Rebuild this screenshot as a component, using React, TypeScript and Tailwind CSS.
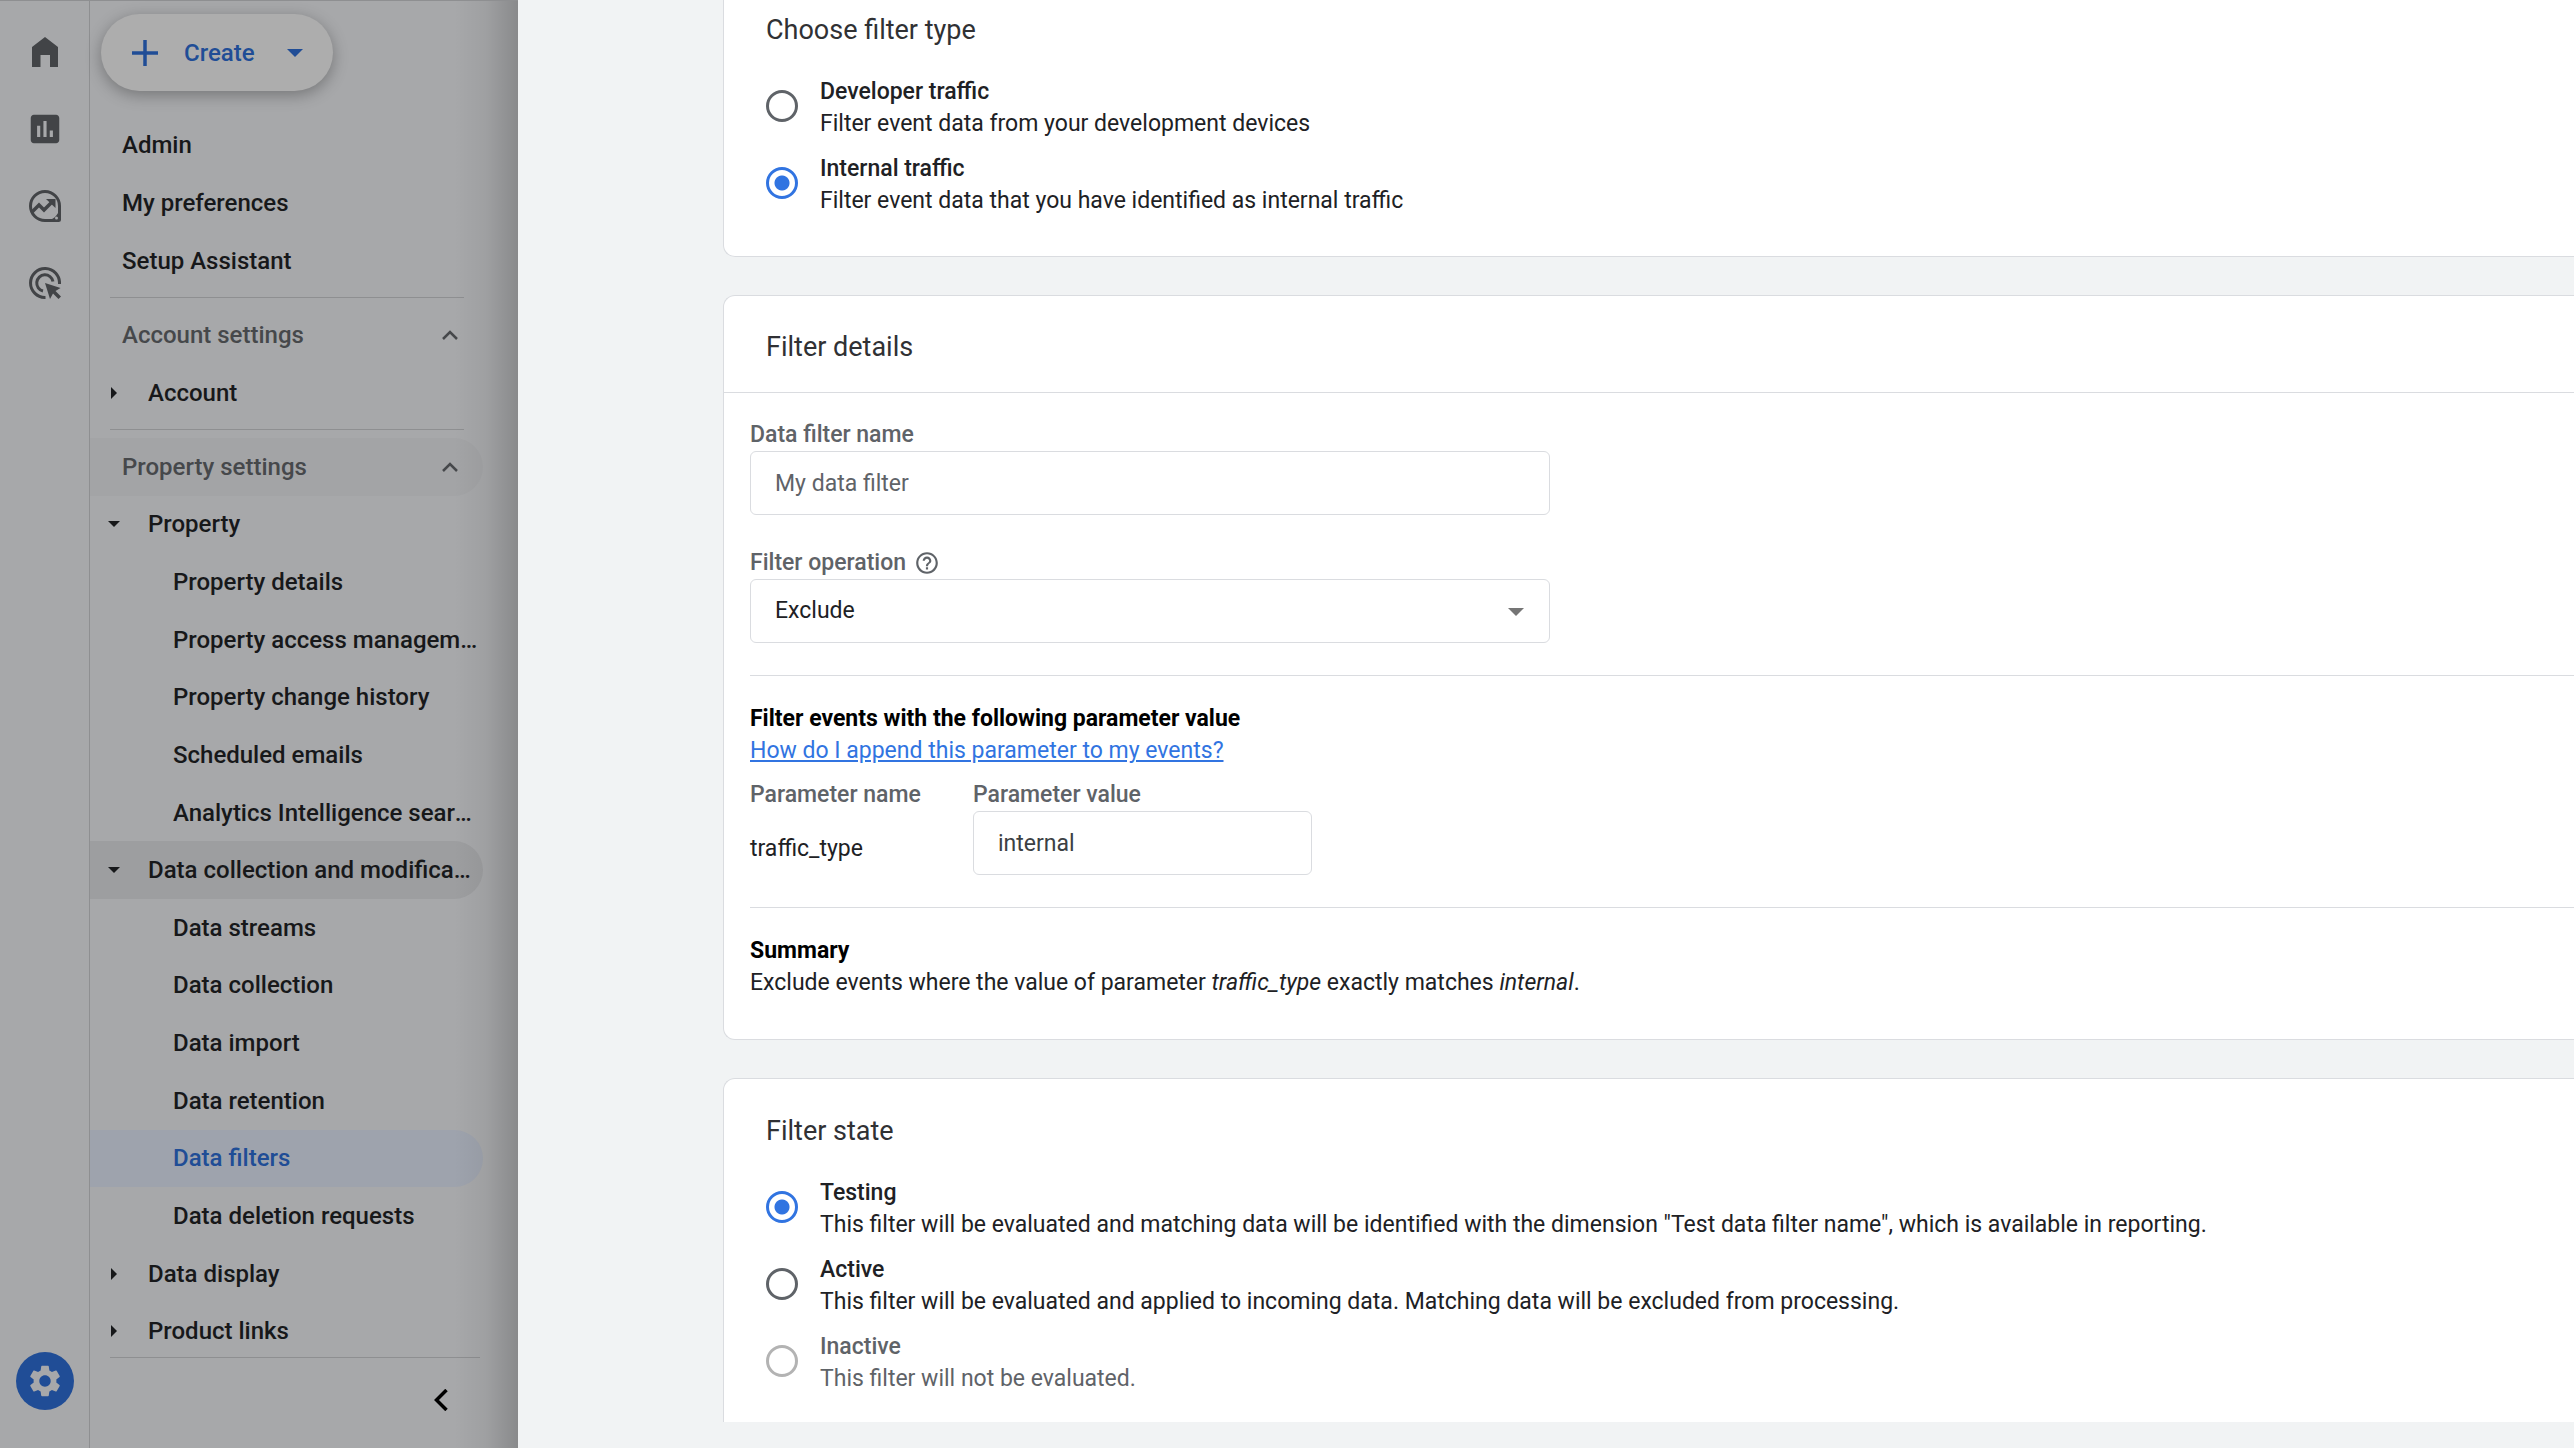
import { useState } from 'react';
import type { ReactNode } from 'react';
import clsx from 'clsx';
import { MdHelpOutline, MdInsertChart, MdSettings } from 'react-icons/md';

type NavRow = { label: string; level: 1 | 2 | 3; open?: boolean; tone?: 'hover' | 'parent' | 'active' };

const TOP_LINKS = ['Admin', 'My preferences', 'Setup Assistant'];

const PROPERTY_ROWS: NavRow[] = [
  { label: 'Property settings', level: 1, open: true, tone: 'hover' },
  { label: 'Property', level: 2, open: true },
  { label: 'Property details', level: 3 },
  { label: 'Property access management', level: 3 },
  { label: 'Property change history', level: 3 },
  { label: 'Scheduled emails', level: 3 },
  { label: 'Analytics Intelligence search history', level: 3 },
  { label: 'Data collection and modification', level: 2, open: true, tone: 'parent' },
  { label: 'Data streams', level: 3 },
  { label: 'Data collection', level: 3 },
  { label: 'Data import', level: 3 },
  { label: 'Data retention', level: 3 },
  { label: 'Data filters', level: 3, tone: 'active' },
  { label: 'Data deletion requests', level: 3 },
  { label: 'Data display', level: 2 },
  { label: 'Product links', level: 2 },
];

const TYPE_OPTIONS = [
  { value: 'developer', label: 'Developer traffic', text: 'Filter event data from your development devices' },
  { value: 'internal', label: 'Internal traffic', text: 'Filter event data that you have identified as internal traffic' },
];

const STATE_OPTIONS = [
  {
    value: 'testing',
    label: 'Testing',
    text: 'This filter will be evaluated and matching data will be identified with the dimension "Test data filter name", which is available in reporting.',
  },
  {
    value: 'active',
    label: 'Active',
    text: 'This filter will be evaluated and applied to incoming data. Matching data will be excluded from processing.',
  },
  { value: 'inactive', label: 'Inactive', text: 'This filter will not be evaluated.', disabled: true },
];

function HomeIcon() {
  return (
    <svg viewBox="0 0 26 30" className="h-[30px] w-[26px]" fill="currentColor">
      <path d="M13 0 26 10v20h-8V18H8.500v12H0V10z" />
    </svg>
  );
}

function ExploreIcon() {
  return (
    <svg viewBox="0 0 32 32" className="size-8" fill="none" stroke="currentColor" strokeWidth="3">
      <path d="M16 30.500A14.500 14.500 0 1 1 30.500 16v13.500a1 1 0 0 1-1 1z" />
      <path d="m3 22 7-7 5 5 9-9" strokeWidth="3.500" />
      <path d="M17 9h9.500v9z" fill="currentColor" stroke="none" />
      <path d="M30 20v10H20c5-1 9-5 10-10z" fill="currentColor" stroke="none" />
      <circle cx="27.500" cy="28" r="1.500" fill="#a7a8aa" stroke="none" />
    </svg>
  );
}

function AdsIcon() {
  return (
    <svg viewBox="0 0 32 32" className="size-8" fill="none" stroke="currentColor" strokeWidth="3">
      <path d="M16.500 30.500A14.500 14.500 0 1 1 30.500 17" />
      <path d="M14 24A8.200 8.200 0 1 1 24 14.500" />
      <path d="m16 16 15.500 5-5 3 5.500 5.500-2.500 2.500-5.500-5.500L21 32z" fill="currentColor" stroke="none" />
    </svg>
  );
}

function Chevron({ className }: { className: string }) {
  return (
    <svg viewBox="0 0 16 10" className={className} fill="none" stroke="currentColor" strokeWidth="2.500">
      <path d="m1 9 7-7 7 7" />
    </svg>
  );
}

function Caret({ open }: { open?: boolean }) {
  return (
    <svg viewBox="0 0 12 12" className="size-3 shrink-0" fill="currentColor">
      <path d={open ? 'M0 3h12L6 9z' : 'M3 0v12l6-6z'} />
    </svg>
  );
}

function NavItem({ label, level, open, tone, className }: NavRow & { className?: string }) {
  return (
    <button
      className={clsx(
        'flex w-[393px] items-center rounded-l-sm rounded-r-full text-left',
        level === 1 && 'pr-4 pl-8 text-[#46484b]',
        level === 2 && 'gap-7 pr-2 pl-[18px]',
        level === 3 && 'pr-1 pl-[83px]',
        tone === 'hover' && 'bg-[#a3a4a6]',
        tone === 'parent' && 'bg-[#9d9ea0]',
        tone === 'active' && 'bg-[#9ea3ad] text-[#204d96]',
        className,
      )}
    >
      {level === 2 && <Caret open={open} />}
      <span className="flex-1 truncate">{label}</span>
      {level === 1 && <Chevron className="mr-[9px] h-[10px] w-4" />}
    </button>
  );
}

function Sidebar() {
  return (
    <nav className="flex w-[428px] shrink-0 flex-col">
      <button className="mt-[13px] ml-[11px] flex h-[77px] w-[232px] items-center rounded-full bg-[#adadad] pl-[31px] text-[#204d96] shadow-[0_4px_16px_rgba(0,0,0,0.3)]">
        <svg viewBox="0 0 26 26" className="size-[26px]" stroke="currentColor" strokeWidth="3.500">
          <path d="M13 0v26M0 13h26" />
        </svg>
        <span className="ml-[26px] w-[103px] text-left">Create</span>
        <svg viewBox="0 0 16 8" className="h-2 w-4" fill="currentColor">
          <path d="M0 0h16L8 8z" />
        </svg>
      </button>
      <div className="mt-[25px] flex flex-col">
        {TOP_LINKS.map(label => (
          <a key={label} href="#" className="flex h-[58px] items-center pl-8">{label}</a>
        ))}
      </div>
      <hr className="mt-[7px] mr-[54px] ml-5 border-[#8e8f91]" />
      <NavItem label="Account settings" level={1} open className="mt-2 h-[58px]" />
      <NavItem label="Account" level={2} className="h-[58px]" />
      <hr className="mt-[7px] mr-[54px] ml-5 border-[#8e8f91]" />
      <div className="mt-2 flex flex-1 flex-col">
        {PROPERTY_ROWS.map(row => (
          <NavItem key={row.label} {...row} className="min-h-12 flex-1" />
        ))}
      </div>
      <div className="-mt-[3px] mr-[38px] ml-5 flex h-[91px] justify-end border-t border-[#8e8f91] pt-5 pr-[26px]">
        <button aria-label="Collapse menu" className="h-11 w-5 text-black">
          <svg viewBox="0 0 14 22" className="h-[22px] w-[14px]" fill="none" stroke="currentColor" strokeWidth="3.500">
            <path d="m12.500 1-10 10 10 10" />
          </svg>
        </button>
      </div>
    </nav>
  );
}

function Card({ className, children }: { className?: string; children: ReactNode }) {
  return <section className={clsx('border-l border-[#dadce0] bg-white', className)}>{children}</section>;
}

function RadioGroup({ name, value, onChange, options }: {
  name: string;
  value: string;
  onChange: (v: string) => void;
  options: { value: string; label: string; text: string; disabled?: boolean }[];
}) {
  return (
    <div className="flex flex-col gap-[9px]">
      {options.map(o => (
        <label key={o.value} className={clsx('flex items-center gap-[22px]', o.disabled && 'text-[#5f6368]')}>
          <input
            type="radio"
            name={name}
            checked={value === o.value}
            disabled={o.disabled}
            onChange={() => onChange(o.value)}
            className="size-8 shrink-0 appearance-none rounded-full border-3 border-[#5f6368] bg-white checked:border-[#3174e1] checked:bg-[radial-gradient(circle,#3174e1_7px,white_8px)] disabled:border-[#b3b3b3]"
          />
          <span className="flex flex-col pt-1 leading-8">
            <span className="font-medium">{o.label}</span>
            <span>{o.text}</span>
          </span>
        </label>
      ))}
    </div>
  );
}

export default function App() {
  const [type, setType] = useState('internal');
  const [state, setState] = useState('testing');
  const [name, setName] = useState('');
  const [param, setParam] = useState('internal');

  const field = 'h-16 rounded-md border border-[#dadce0] bg-white px-6';
  const title = 'text-[27px] leading-8 text-[#303134]';

  return (
    <div className="flex h-screen overflow-hidden bg-[#f1f3f4] font-[Roboto,sans-serif] text-[23px] leading-8 text-[#202124]">
      <div className="relative flex shrink-0 border-t border-[#8e8f91] bg-[#a7a8aa] text-[24px] font-medium text-[#17181a]">
        <div className="flex w-[90px] flex-col items-center border-r border-[#8e8f91] pt-[35px] pb-[38px] text-[#424447]">
          <button aria-label="Home" className="flex h-8 items-center"><HomeIcon /></button>
          <button aria-label="Reports" className="mt-[42px]"><MdInsertChart className="size-[38px]" /></button>
          <button aria-label="Explore" className="mt-[42px]"><ExploreIcon /></button>
          <button aria-label="Advertising" className="mt-[45px]"><AdsIcon /></button>
          <button aria-label="Admin" className="mt-auto flex size-[58px] items-center justify-center rounded-full bg-[#204d96] text-[#a7a8aa]">
            <MdSettings className="size-[38px]" />
          </button>
        </div>
        <Sidebar />
        <div className="pointer-events-none absolute inset-y-0 right-0 w-16 bg-linear-to-l from-black/18 via-black/5 to-transparent" />
      </div>

      <main className="min-w-0 flex-1 pb-[26px] pl-[205px]">
        <div className="h-full overflow-hidden">
          <Card className="rounded-bl-xl border-b px-[42px] pt-[14px] pb-[39px]">
            <h2 className={clsx(title, 'mb-[26px]')}>Choose filter type</h2>
            <RadioGroup name="type" value={type} onChange={setType} options={TYPE_OPTIONS} />
          </Card>

          <Card className="mt-[38px] rounded-l-xl border-y">
            <h2 className={clsx(title, 'border-b border-[#dadce0] px-[42px] pt-[35px] pb-[29px]')}>Filter details</h2>
            <div className="pt-[26px] pb-10 pl-[26px]">
              <label htmlFor="name" className="block font-medium text-[#5f6368]">Data filter name</label>
              <input
                id="name"
                value={name}
                onChange={e => setName(e.target.value)}
                placeholder="My data filter"
                className={clsx(field, 'block w-[800px] placeholder:text-[#5f6368]')}
              />
              <div className="mt-8 flex items-center gap-2 font-medium text-[#5f6368]">
                <label htmlFor="operation">Filter operation</label>
                <MdHelpOutline className="size-[26px]" />
              </div>
              <div className="relative w-[800px]">
                <select id="operation" className={clsx(field, 'block w-full appearance-none')}>
                  <option>Exclude</option>
                  <option>Include</option>
                </select>
                <svg viewBox="0 0 16 8" className="pointer-events-none absolute top-[29px] right-[26px] h-2 w-4" fill="#757575">
                  <path d="M0 0h16L8 8z" />
                </svg>
              </div>

              <hr className="mt-8 mb-[27px] border-[#dadce0]" />
              <h3 className="font-bold text-black">Filter events with the following parameter value</h3>
              <a href="#" className="text-[#3174e1] underline">How do I append this parameter to my events?</a>
              <div className="mt-3 flex">
                <div className="w-[223px]">
                  <div className="font-medium text-[#5f6368]">Parameter name</div>
                  <div className="mt-[22px]">traffic_type</div>
                </div>
                <div>
                  <label htmlFor="param" className="block font-medium text-[#5f6368]">Parameter value</label>
                  <input
                    id="param"
                    value={param}
                    onChange={e => setParam(e.target.value)}
                    className={clsx(field, 'block w-[339px] text-[#3c4043]')}
                  />
                </div>
              </div>

              <hr className="mt-8 mb-[27px] border-[#dadce0]" />
              <h3 className="font-bold text-black">Summary</h3>
              <p>
                Exclude events where the value of parameter <i>traffic_type</i> exactly matches <i>{param}</i>.
              </p>
            </div>
          </Card>

          <Card className="mt-[38px] rounded-tl-xl border-t px-[42px] pt-9 pb-16">
            <h2 className={clsx(title, 'mb-[26px]')}>Filter state</h2>
            <RadioGroup name="state" value={state} onChange={setState} options={STATE_OPTIONS} />
          </Card>
        </div>
      </main>
    </div>
  );
}
